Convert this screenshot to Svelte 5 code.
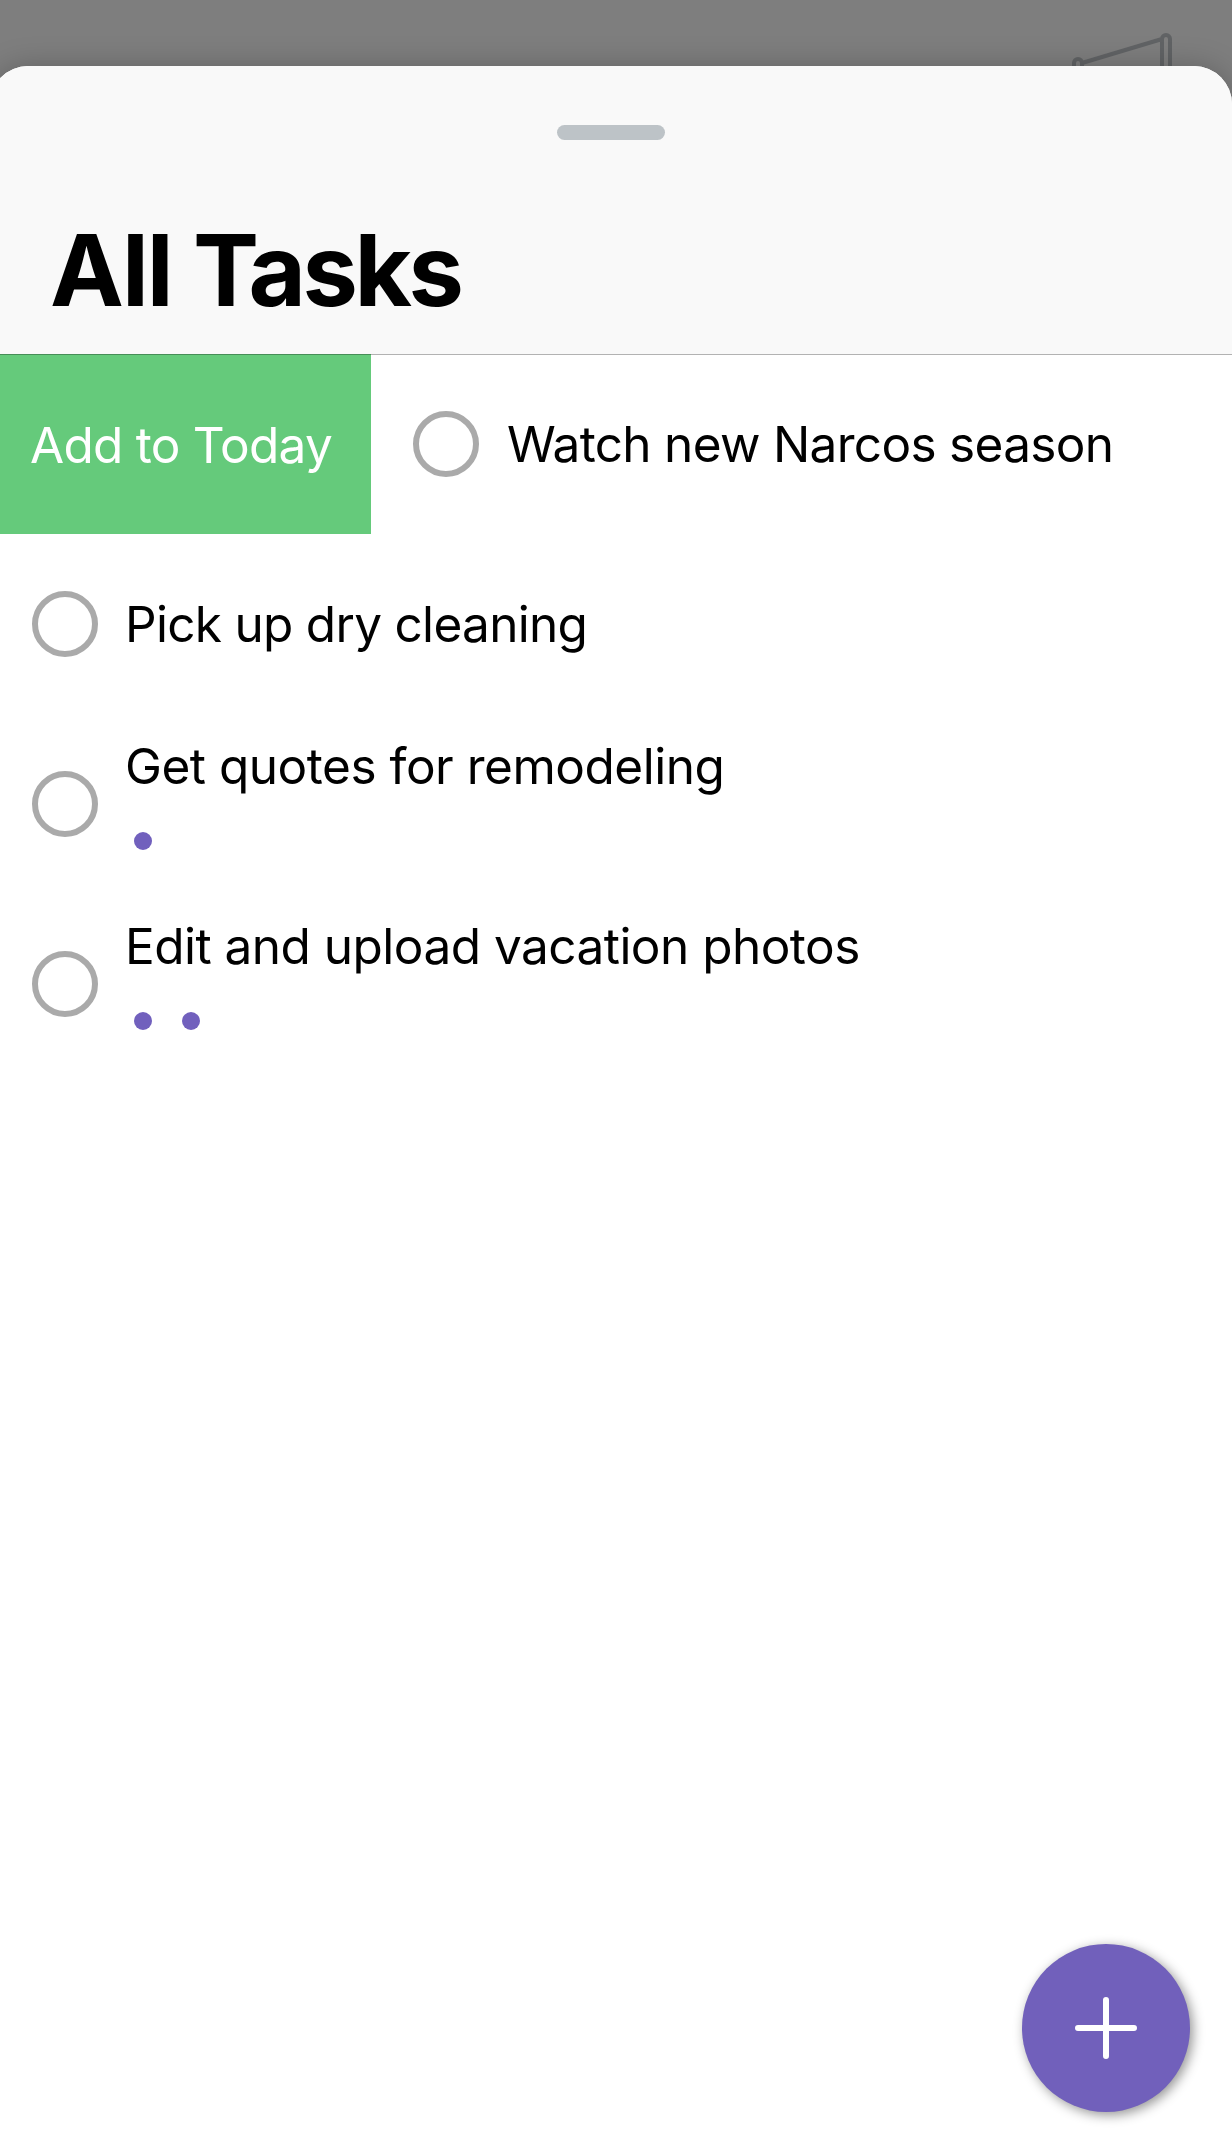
<script>
  const tasks = [
    { title: 'Watch new Narcos season', dots: 0, swiped: true, fit: 'fit-watch' },
    { title: 'Pick up dry cleaning', dots: 0, swiped: false, fit: 'fit-pick' },
    { title: 'Get quotes for remodeling', dots: 1, swiped: false, fit: 'fit-quotes' },
    { title: 'Edit and upload vacation photos', dots: 2, swiped: false, fit: 'fit-photos' }
  ];
</script>

<div class="screen">
  <svg class="banner" viewBox="0 0 110 60" aria-hidden="true">
    <path d="M8 60V35a4 4 0 0 1 8 0V60M96 60V11a4 4 0 0 1 8 0V60M16 35L96 11" />
  </svg>
  <main class="sheet">
    <header>
      <div class="handle"></div>
      <h1>All <span>Tasks</span></h1>
    </header>
    <ul>
      {#each tasks as task}
        <li>
          {#if task.swiped}
            <button class="action">Add to Today</button>
          {/if}
          <div class="task" class:shifted={task.swiped}>
            <span class="check"></span>
            <div class="body">
              <span class="title {task.fit}">{task.title}</span>
              {#if task.dots}
                <div class="dots">
                  {#each Array(task.dots) as _}<i></i>{/each}
                </div>
              {/if}
            </div>
          </div>
        </li>
      {/each}
    </ul>
  </main>
  <button class="fab" aria-label="Add task">
    <svg viewBox="0 0 62 62" aria-hidden="true"><path d="M31 3V59M3 31H59" /></svg>
  </button>
</div>

<style>
  :global(body) { margin: 0; }
  .screen {
    position: relative;
    width: 1232px;
    height: 2154px;
    overflow: hidden;
    box-sizing: border-box;
    padding-top: 66px;
    background: #7e7e7e;
    font-family: Inter, "Liberation Sans", sans-serif;
    color: #000;
  }
  .banner {
    position: absolute;
    top: 28px;
    left: 1066px;
    width: 110px;
    height: 60px;
    fill: none;
    stroke: #616365;
    stroke-width: 4;
  }
  .sheet {
    position: relative;
    height: 2088px;
    margin-left: -10px;
    padding-left: 10px;
    border-radius: 38px 38px 0 0;
    overflow: hidden;
    background: #fff;
    box-shadow: 0 0 30px rgba(0, 0, 0, 0.22);
  }
  header {
    box-sizing: border-box;
    height: 288px;
    margin-left: -10px;
    padding: 59px 0 0;
    background: #f9f9f9;
  }
  .handle {
    width: 108px;
    height: 15px;
    margin: 0 auto;
    border-radius: 8px;
    background: #bdc3c7;
  }
  h1 {
    margin: 70px 0 0 60px;
    font-size: 99px;
    line-height: 120px;
    font-weight: 700;
    letter-spacing: -2px;
    white-space: nowrap;
  }
  h1 span { letter-spacing: -3.4px; }
  ul {
    margin: 0;
    padding: 0;
    list-style: none;
  }
  li { display: flex; height: 180px; }
  li:first-child { box-shadow: inset 0 1px #b2b2b2; }
  button { border: 0; padding: 0; font: inherit; }
  .action {
    width: 371px;
    height: 180px;
    padding-top: 2px;
    padding-left: 30px;
    text-align: left;
    background: #65ca7b;
    box-shadow: inset 0 1px #478d57;
    color: #fff;
    font-size: 49.5px;
    letter-spacing: -0.75px;
    white-space: nowrap;
  }
  .task {
    display: flex;
    align-items: center;
    gap: 27px;
    padding-left: 32px;
  }
  .shifted { padding-left: 42px; gap: 28px; }
  .check {
    box-sizing: border-box;
    width: 66px;
    height: 66px;
    border: 6px solid #aaa;
    border-radius: 50%;
  }
  .body { display: flex; flex-direction: column; }
  .title {
    font-size: 49.5px;
    line-height: 60px;
    white-space: nowrap;
  }
  .fit-watch { letter-spacing: -0.69px; }
  .fit-pick { letter-spacing: -0.7px; }
  .fit-quotes { letter-spacing: -0.48px; }
  .fit-photos { letter-spacing: -0.52px; }
  .dots {
    display: flex;
    gap: 30px;
    height: 40px;
    padding: 36px 0 0 9px;
  }
  .dots i {
    width: 18px;
    height: 18px;
    border-radius: 50%;
    background: #7160bd;
  }
  .fab {
    position: absolute;
    right: 42px;
    bottom: 42px;
    display: grid;
    place-items: center;
    width: 168px;
    height: 168px;
    border-radius: 50%;
    background: #7160bb;
    box-shadow: 3px 3px 12px rgba(0, 0, 0, 0.42);
  }
  .fab svg {
    width: 62px;
    height: 62px;
    fill: none;
    stroke: #fff;
    stroke-width: 6;
    stroke-linecap: round;
  }
</style>
